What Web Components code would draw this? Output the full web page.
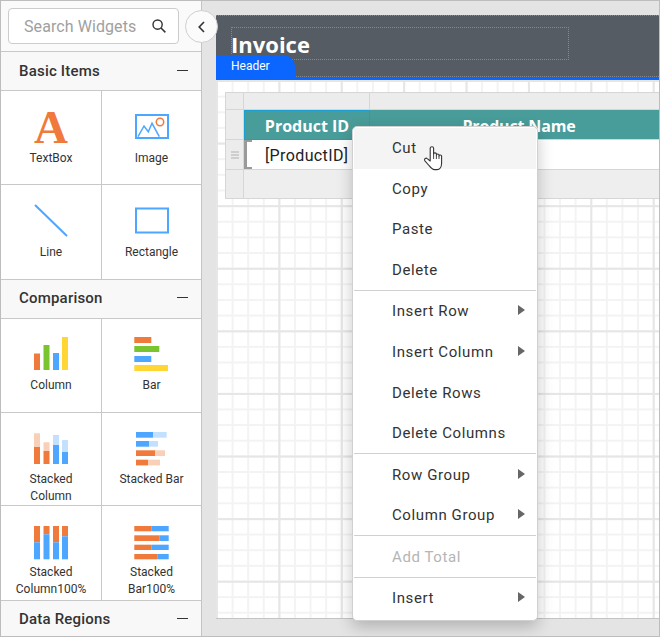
<!DOCTYPE html>
<html>
<head>
<meta charset="utf-8">
<title>Report Designer</title>
<style>
  html, body { margin: 0; padding: 0; background: #e4e4e4; overflow: hidden; }
</style>
</head>
<body>
<report-designer>
  <widget-panel slot="panel">
    <widget-group title="Basic Items" rows="94 94" style="--label-shift: 1px; --head-pad: 1px">
      <widget-item label="TextBox" icon="textbox"></widget-item>
      <widget-item label="Image" icon="image"></widget-item>
      <widget-item label="Line" icon="line" last></widget-item>
      <widget-item label="Rectangle" icon="rectangle" last></widget-item>
    </widget-group>
    <widget-group title="Comparison" rows="94 93 94">
      <widget-item label="Column" icon="column"></widget-item>
      <widget-item label="Bar" icon="bar"></widget-item>
      <widget-item label="Stacked Column" icon="stacked-column"></widget-item>
      <widget-item label="Stacked Bar" icon="stacked-bar"></widget-item>
      <widget-item label="Stacked Column100%" icon="stacked-column-100" last></widget-item>
      <widget-item label="Stacked Bar100%" icon="stacked-bar-100" last></widget-item>
    </widget-group>
    <widget-group title="Data Regions" rows=""></widget-group>
  </widget-panel>
  <design-surface slot="canvas"></design-surface>
  <context-menu slot="overlay">
    <menu-item active>Cut</menu-item>
    <menu-item>Copy</menu-item>
    <menu-item>Paste</menu-item>
    <menu-item>Delete</menu-item>
    <menu-sep></menu-sep>
    <menu-item arrow>Insert Row</menu-item>
    <menu-item arrow>Insert Column</menu-item>
    <menu-item>Delete Rows</menu-item>
    <menu-item>Delete Columns</menu-item>
    <menu-sep></menu-sep>
    <menu-item arrow>Row Group</menu-item>
    <menu-item arrow>Column Group</menu-item>
    <menu-sep></menu-sep>
    <menu-item disabled>Add Total</menu-item>
    <menu-sep></menu-sep>
    <menu-item arrow>Insert</menu-item>
  </context-menu>
  <hand-cursor slot="overlay"></hand-cursor>
</report-designer>

<script>
const ORANGE = '#ef7a3c';
const ORANGE_LIGHT = '#f9cfb8';
const BLUE = '#4da6ff';
const BLUE_LIGHT = '#c4e0ff';
const GREEN = '#7ac52f';
const YELLOW = '#ffd633';

// small helper for the chart icons: [x, y, w, h, fill]
const bars = list => list.map(b => `<rect x="${b[0]}" y="${b[1]}" width="${b[2]}" height="${b[3]}" fill="${b[4]}"/>`).join('');

const ICONS = {
  textbox: `<text x="20" y="33.5" text-anchor="middle" font-family="'Liberation Serif', serif" font-weight="700" font-size="47" fill="${ORANGE}">A</text>`,
  image: `<rect x="4" y="6" width="32" height="23" fill="none" stroke="${BLUE}" stroke-width="2"/>
    <polyline points="6,27.7 12,17 16.3,22.7 20,14.3 27.3,27.7" fill="none" stroke="${BLUE}" stroke-width="1.5"/>
    <circle cx="28" cy="13" r="3.7" fill="none" stroke="${ORANGE}" stroke-width="1.5"/>`,
  line: `<line x1="4" y1="2" x2="36" y2="33" stroke="${BLUE}" stroke-width="2"/>`,
  rectangle: `<rect x="4" y="5.5" width="32" height="24" fill="none" stroke="${BLUE}" stroke-width="2"/>`,
  column: bars([[3, 16.5, 6, 16.5, ORANGE], [12.5, 8, 6, 25, GREEN], [22, 16, 6, 17, BLUE], [31, 0, 6, 33, YELLOW]]),
  bar: bars([[2.3, 0, 17, 6, ORANGE], [2.3, 9, 25, 6, GREEN], [2.3, 19, 17, 6, BLUE], [2.3, 28, 33.7, 6, YELLOW]]),
  'stacked-column': bars([
    [3, 2.3, 6, 14, ORANGE_LIGHT], [3, 16, 6, 17, ORANGE],
    [12.5, 11.3, 6, 9, ORANGE_LIGHT], [12.5, 20, 6, 13, ORANGE],
    [22, 4, 6, 10, BLUE_LIGHT], [22, 14, 6, 19, BLUE],
    [31, 9, 6, 12, BLUE_LIGHT], [31, 21, 6, 12, BLUE]
  ]),
  'stacked-bar': bars([
    [4, 1, 17, 5.7, BLUE], [21, 1, 13.7, 5.7, BLUE_LIGHT],
    [4, 10, 13.3, 5.7, BLUE], [17.3, 10, 8.7, 5.7, BLUE_LIGHT],
    [4, 19.3, 19.3, 5.7, ORANGE], [23.3, 19.3, 9.7, 5.7, ORANGE_LIGHT],
    [4, 28.7, 12.3, 5.7, ORANGE], [16.3, 28.7, 11.7, 5.7, ORANGE_LIGHT]
  ]),
  'stacked-column-100': bars([
    [3, 2, 6, 16.3, ORANGE], [3, 18.3, 6, 17, BLUE],
    [12.5, 2, 6, 8.3, ORANGE], [12.5, 10.3, 6, 25, BLUE],
    [22, 2, 6, 16.3, ORANGE], [22, 18.3, 6, 17, BLUE],
    [31, 2, 6, 10.3, ORANGE], [31, 12.3, 6, 23, BLUE]
  ]),
  'stacked-bar-100': bars([
    [2.3, 2, 17.4, 5.3, ORANGE], [19.7, 2, 17, 5.3, BLUE],
    [2.3, 11.3, 25, 5.7, ORANGE], [27.3, 11.3, 9.4, 5.7, BLUE],
    [2.3, 20.7, 17.4, 5.3, ORANGE], [19.7, 20.7, 17, 5.3, BLUE],
    [2.3, 30, 23, 5.3, ORANGE], [25.3, 30, 11.4, 5.3, BLUE]
  ])
};

class ReportDesigner extends HTMLElement {
  constructor() {
    super();
    this.attachShadow({ mode: 'open' });
    this.shadowRoot.innerHTML = `
      <style>
        :host {
          display: flex;
          position: relative;
          box-sizing: border-box;
          width: 660px;
          height: 637px;
          border: 1px solid #bdbdbd;
          overflow: hidden;
          font-family: Roboto, sans-serif;
          color: #333;
        }
        .collapse {
          position: absolute;
          left: 184px;
          top: 9px;
          width: 33px;
          height: 33px;
          box-sizing: border-box;
          border-radius: 50%;
          border: 1px solid #cfcfcf;
          background: #fbfbfb;
          display: flex;
          align-items: center;
          justify-content: center;
          z-index: 2;
        }
        .collapse svg { margin-left: 1px; }
      </style>
      <slot name="panel"></slot>
      <slot name="canvas"></slot>
      <div class="collapse">
        <svg width="10" height="12" viewBox="0 0 10 12"><path d="M7 1 L2.2 6 L7 11" fill="none" stroke="#333" stroke-width="1.6"/></svg>
      </div>
      <slot name="overlay"></slot>
    `;
  }
}

class WidgetPanel extends HTMLElement {
  constructor() {
    super();
    this.attachShadow({ mode: 'open' });
    this.shadowRoot.innerHTML = `
      <style>
        :host {
          display: block;
          flex: none;
          box-sizing: border-box;
          width: 201px;
          height: 100%;
          background: #fff;
          border-right: 1px solid #c4c4c4;
          overflow: hidden;
        }
        .search-wrap { height: 50px; box-sizing: border-box; padding: 7px 22px 7px 7px; background: #fafafa; }
        .search {
          height: 36px;
          box-sizing: border-box;
          border: 1px solid #ccc;
          border-radius: 4px;
          background: #fff;
          display: flex;
          align-items: center;
          justify-content: space-between;
          padding: 0 12px 0 15px;
          font-size: 16px;
          letter-spacing: .08px;
          color: #a0a0a0;
        }
      </style>
      <div class="search-wrap">
        <div class="search">
          <span>Search Widgets</span>
          <svg width="14" height="14" viewBox="0 0 14 14">
            <circle cx="5.6" cy="5.6" r="4.6" fill="none" stroke="#333" stroke-width="1.4"/>
            <line x1="9" y1="9" x2="13.4" y2="13.4" stroke="#333" stroke-width="1.5"/>
          </svg>
        </div>
      </div>
      <slot></slot>
    `;
  }
}

class WidgetGroup extends HTMLElement {
  constructor() {
    super();
    this.attachShadow({ mode: 'open' });
    const rows = (this.getAttribute('rows') || '').trim().split(/\s+/).filter(Boolean).map(r => r + 'px').join(' ');
    this.shadowRoot.innerHTML = `
      <style>
        :host { display: block; }
        .head {
          height: 40px;
          box-sizing: border-box;
          border-top: 1px solid #c8c8c8;
          border-bottom: 1px solid #c8c8c8;
          background: #f8f8f8;
          display: flex;
          align-items: center;
          justify-content: space-between;
          padding: 0 13px var(--head-pad, 3px) 18px;
          font-size: 15px;
          font-weight: 500;
          letter-spacing: .2px;
        }
        .minus { width: 11px; height: 1.5px; background: #333; }
        .grid { display: grid; grid-template-columns: 101px 99px; grid-template-rows: ${rows || 'none'}; }
      </style>
      <div class="head"><span>${this.getAttribute('title')}</span><span class="minus"></span></div>
      <div class="grid"><slot></slot></div>
    `;
  }
}

class WidgetItem extends HTMLElement {
  constructor() {
    super();
    this.attachShadow({ mode: 'open' });
    this.shadowRoot.innerHTML = `
      <style>
        :host {
          display: block;
          box-sizing: border-box;
          padding-top: 18px;
          text-align: center;
          border-bottom: 1px solid #c8c8c8;
          overflow: hidden;
        }
        :host(:nth-child(odd)) { border-right: 1px solid #c8c8c8; }
        :host([last]) { border-bottom: 0; }
        svg { display: block; margin: 0 auto; overflow: visible; }
        .label { font-size: 12px; line-height: 17px; padding: var(--label-shift, 0) 12px 0; }
      </style>
      <svg width="40" height="40" viewBox="0 0 40 40">${ICONS[this.getAttribute('icon')]}</svg>
      <div class="label">${this.getAttribute('label')}</div>
    `;
  }
}

class DesignSurface extends HTMLElement {
  constructor() {
    super();
    this.attachShadow({ mode: 'open' });
    this.shadowRoot.innerHTML = `
      <style>
        :host {
          display: block;
          flex: 1;
          min-width: 0;
          box-sizing: border-box;
          background: #e4e4e4;
          padding: 14px 0 17px 14px;
          height: 100%;
        }
        .page {
          height: 100%;
          box-sizing: border-box;
          border-bottom: 1px solid #c4c4c4;
          display: flex;
          flex-direction: column;
          background: #fff;
        }
        .band {
          flex: none;
          height: 62px;
          box-sizing: border-box;
          background: #555c63;
          border-top: 1px dotted #888;
          border-bottom: 1px dotted #888;
          padding: 11px 0 0 15px;
          position: relative;
        }
        .title {
          width: 338px;
          height: 33px;
          box-sizing: border-box;
          border: 1px dotted #888;
          color: #fff;
          font: 700 22px/28px "Open Sans", sans-serif;
          white-space: nowrap;
          padding-top: 2px;
        }
        .title span { display: block; margin-left: -1px; }
        .tab {
          position: absolute;
          left: 0;
          bottom: -1px;
          width: 79px;
          height: 22px;
          box-sizing: border-box;
          padding-left: 15px;
          background: #0a66ff;
          border-top-right-radius: 12px;
          color: #fff;
          font-size: 12px;
          line-height: 23px;
        }
        .rule { flex: none; height: 3px; background: #0a66ff; }
        .grid {
          flex: 1;
          padding: 12px 0 0 9px;
          overflow: hidden;
          background-color: #fff;
          background-image:
            linear-gradient(to right, #e6e6e6 2px, transparent 2px),
            linear-gradient(to bottom, #e6e6e6 1.5px, transparent 1.5px),
            linear-gradient(to right, #f3f3f3 2px, transparent 2px),
            linear-gradient(to bottom, #f3f3f3 2px, transparent 2px);
          background-size: 62.4px 100%, 100% 62.6px, 15.6px 100%, 100% 15.65px;
        }
      </style>
      <div class="page">
        <div class="band">
          <div class="title"><span>Invoice</span></div>
          <div class="tab">Header</div>
        </div>
        <div class="rule"></div>
        <div class="grid"><report-table></report-table></div>
      </div>
    `;
  }
}

class ReportTable extends HTMLElement {
  constructor() {
    super();
    this.attachShadow({ mode: 'open' });
    this.shadowRoot.innerHTML = `
      <style>
        :host {
          display: grid;
          grid-template-columns: 19px 126px 290px;
          grid-template-rows: 18px 30px 30px 29px;
          width: 435px;
          font-size: 16px;
        }
        .cell { box-sizing: border-box; display: flex; align-items: center; border-bottom: 1px solid #d6d6d6; }
        .handle { background: #ececec; border-right: 1px solid #d6d6d6; }
        .first { border-left: 1px solid #d6d6d6; border-top: 1px solid #d6d6d6; }
        .top { border-top: 1px solid #d6d6d6; }
        .head {
          background: #489c9a;
          color: #fff;
          font: 700 16px "Open Sans", sans-serif;
          justify-content: center;
          white-space: nowrap;
          border-bottom: 1px solid #d6d6d6;
          padding-top: 2px;
        }
        .name { padding-left: 8px; letter-spacing: -.15px; }
        .selected { outline: 1px solid #1a9fd0; outline-offset: -1px; }
        .data { background: #fff; color: #222; padding: 2px 0 0 21px; position: relative; letter-spacing: .38px; }
        .marker {
          position: absolute;
          left: 0;
          top: 0;
          bottom: 0;
          width: 8px;
          box-sizing: border-box;
          border: 2px solid #9a9a9a;
          border-right: 0;
          border-left-width: 3px;
        }
        .grip { justify-content: center; }
        .grip svg { display: block; }
        .foot { background: #efeeef; }
      </style>
      <div class="cell handle first"></div>
      <div class="cell handle top"></div>
      <div class="cell handle top" style="border-right:0"></div>

      <div class="cell handle" style="border-left:1px solid #d6d6d6"></div>
      <div class="cell head selected">Product ID</div>
      <div class="cell head name">Product Name</div>

      <div class="cell handle grip" style="border-left:1px solid #d6d6d6">
        <svg width="8" height="8" viewBox="0 0 8 8"><path d="M0 1H8M0 4H8M0 7H8" stroke="#b0b0b0" stroke-width="1"/></svg>
      </div>
      <div class="cell data"><span class="marker"></span>[ProductID]</div>
      <div class="cell data"></div>

      <div class="cell handle" style="border-left:1px solid #d6d6d6"></div>
      <div class="cell foot" style="border-right:1px solid #d6d6d6"></div>
      <div class="cell foot"></div>
    `;
  }
}

class ContextMenu extends HTMLElement {
  constructor() {
    super();
    this.attachShadow({ mode: 'open' });
    this.shadowRoot.innerHTML = `
      <style>
        :host {
          display: block;
          position: absolute;
          left: 351px;
          top: 125px;
          width: 186px;
          box-sizing: border-box;
          padding: 1px;
          background: #fff;
          border: 1px solid #d0d0d0;
          border-radius: 5px;
          box-shadow: 0 6px 16px rgba(0, 0, 0, .22);
          z-index: 3;
        }
      </style>
      <slot></slot>
    `;
  }
}

class MenuItem extends HTMLElement {
  constructor() {
    super();
    this.attachShadow({ mode: 'open' });
    this.shadowRoot.innerHTML = `
      <style>
        :host {
          display: flex;
          align-items: center;
          justify-content: space-between;
          height: 40.56px;
          box-sizing: border-box;
          padding: 0 11px 0 38px;
          font-size: 15px;
          letter-spacing: .6px;
          color: #333;
        }
        :host([active]) { background: #f4f4f4; }
        :host([disabled]) { color: #b5b5b5; }
        .arrow { width: 0; height: 0; border-left: 7px solid #666; border-top: 5px solid transparent; border-bottom: 5px solid transparent; margin-top: -2px; display: none; }
        :host([arrow]) .arrow { display: block; }
      </style>
      <span><slot></slot></span>
      <span class="arrow"></span>
    `;
  }
}

class MenuSep extends HTMLElement {
  constructor() {
    super();
    this.attachShadow({ mode: 'open' });
    this.shadowRoot.innerHTML = `<style>:host { display: block; height: 1px; background: #d0d0d0; }</style>`;
  }
}

class HandCursor extends HTMLElement {
  constructor() {
    super();
    this.attachShadow({ mode: 'open' });
    this.shadowRoot.innerHTML = `
      <style>
        :host { display: block; position: absolute; left: 423px; top: 145px; width: 20px; height: 26px; z-index: 4; }
        svg { display: block; }
      </style>
      <svg width="20" height="26" viewBox="0 0 20 26">
        <path d="M6.2 14.5 V2.2 C6.2 .3 9.6 .3 9.6 2.2 V8 C9.6 6.5 12.4 6.5 12.4 8 V9 C12.4 7.6 15 7.6 15 9 V10 C15 8.6 17.6 8.6 17.6 10 V17 C17.6 20.5 16 23.6 13 23.6 H10.5 C8 23.6 6.5 21.5 5 19.5 L.9 14.8 C-.2 13.2 1.8 11.4 3.2 12.6 L6.2 15 Z"
          fill="#fff" stroke="#333" stroke-width="1.1" stroke-linejoin="round"/>
        <path d="M9.6 8 V13 M12.4 9 V13 M15 10 V13" fill="none" stroke="#333" stroke-width=".9"/>
      </svg>
    `;
  }
}

customElements.define('report-table', ReportTable);
customElements.define('design-surface', DesignSurface);
customElements.define('widget-item', WidgetItem);
customElements.define('widget-group', WidgetGroup);
customElements.define('widget-panel', WidgetPanel);
customElements.define('menu-item', MenuItem);
customElements.define('menu-sep', MenuSep);
customElements.define('context-menu', ContextMenu);
customElements.define('hand-cursor', HandCursor);
customElements.define('report-designer', ReportDesigner);
</script>
</body>
</html>
